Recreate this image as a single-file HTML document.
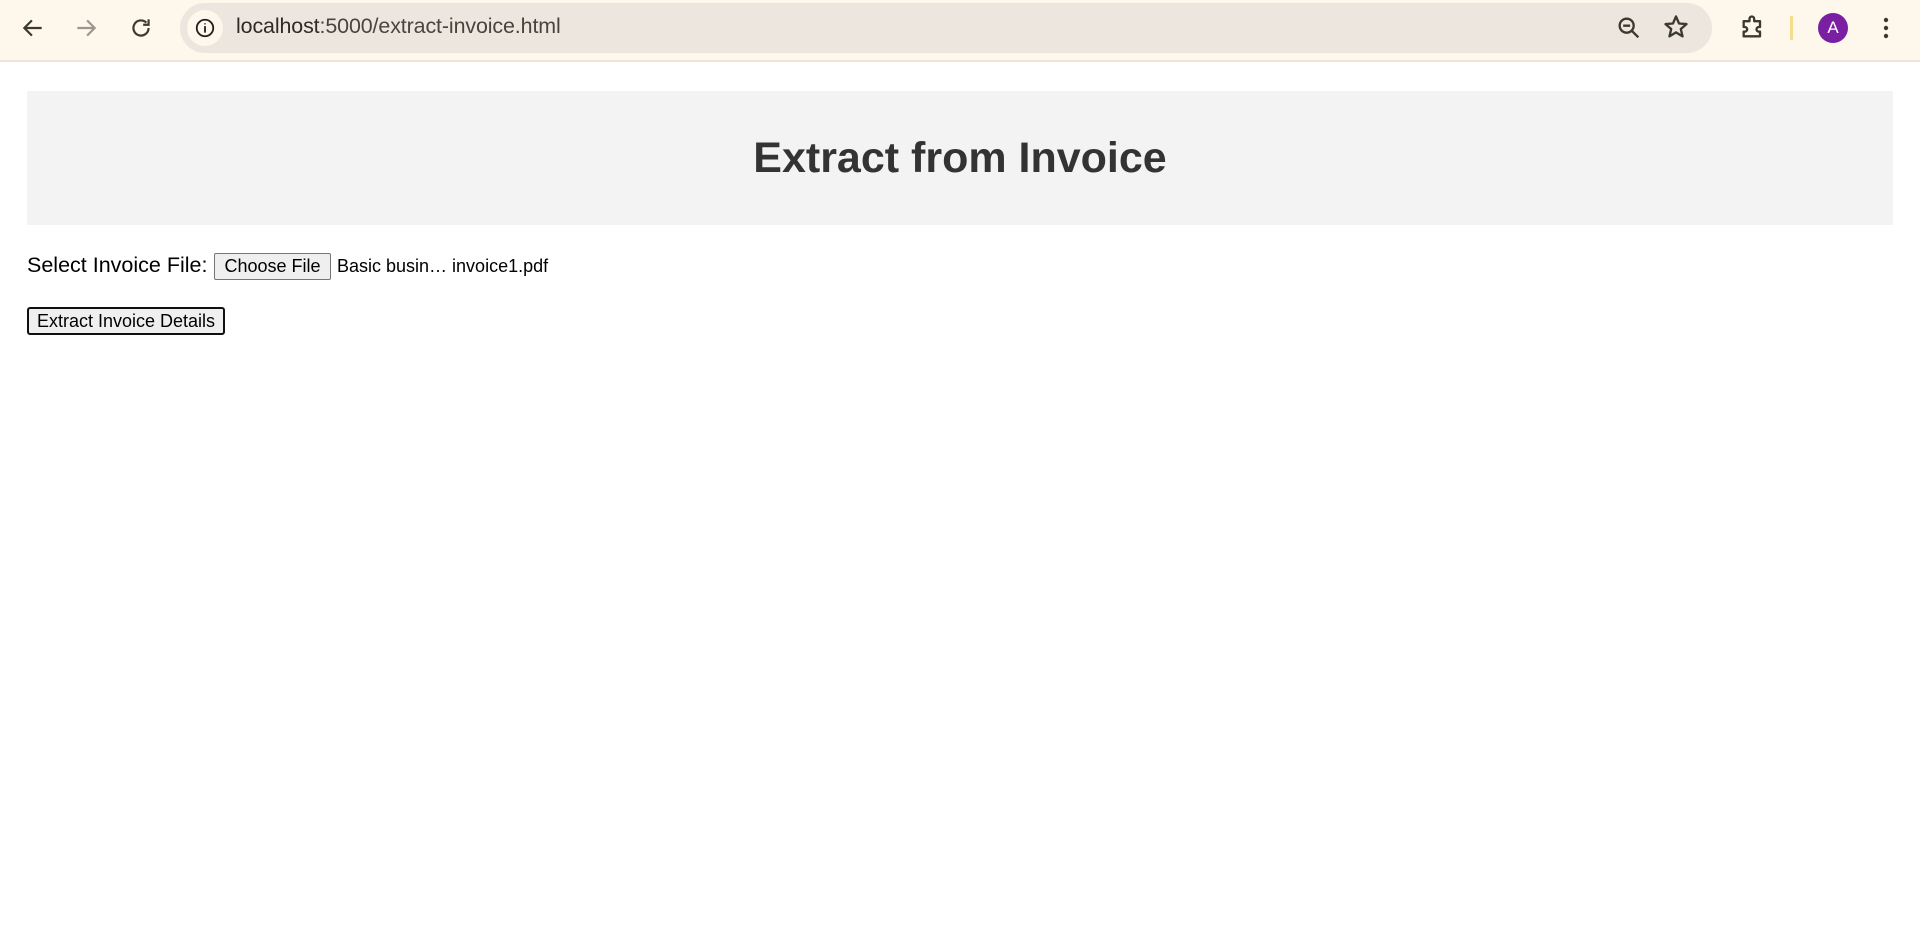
<!DOCTYPE html>
<html><head><meta charset="utf-8"><style>
*{box-sizing:border-box}
body{margin:0;width:1920px;height:935px;overflow:hidden;background:#fff;font-family:"Liberation Sans",Arial,sans-serif;position:relative}
.bar{position:absolute;left:0;top:0;width:1920px;height:62px;background:#fdf7ec;border-bottom:2px solid #eee5d6}
.omni{position:absolute;left:180px;top:3px;width:1532px;height:50px;border-radius:25px;background:#ede6df}
.info{position:absolute;left:187px;top:10px;width:36px;height:36px;border-radius:50%;background:#fdf7ec}
.url{position:absolute;left:236px;top:14px;font-size:21.4px;color:#2e2a26;letter-spacing:-0.1px}
.url span{color:#4a433d}
svg{position:absolute}
.avatar{position:absolute;left:1818px;top:13px;width:30px;height:30px;border-radius:50%;background:#7b1fa2;color:#fff;font-size:17px;text-align:center;line-height:30px}
.div{position:absolute;left:1790px;top:16px;width:3px;height:24px;background:#f6dc8a}
.hdr{position:absolute;left:27px;top:91px;width:1866px;height:134px;background:#f3f3f3}
.hdr h1{margin:0;text-align:center;line-height:134px;font-size:43px;font-weight:bold;color:#333}
.lbl{position:absolute;left:27px;top:253px;font-size:21.5px;color:#000}
.btn{position:absolute;background:#efefef;border:1px solid #767676;border-radius:2px;font-size:18px;color:#000;text-align:center}
.fname{position:absolute;left:337px;top:256px;font-size:18px;color:#000}
</style></head><body>
<div class="bar">
<svg style="left:20px;top:15px" width="26" height="26" viewBox="0 0 24 24"><path d="M20 12H5M11 5l-7 7 7 7" fill="none" stroke="#3b3a2e" stroke-width="2"/></svg>
<svg style="left:73px;top:15px" width="26" height="26" viewBox="0 0 24 24"><path d="M4 12h15M13 5l7 7-7 7" fill="none" stroke="#9a978e" stroke-width="2"/></svg>
<svg style="left:128px;top:15px" width="26" height="26" viewBox="0 0 24 24"><path d="M19 12a7 7 0 1 1-2.1-5" fill="none" stroke="#3b3a2e" stroke-width="2"/><path d="M19 4v5h-5" fill="none" stroke="#3b3a2e" stroke-width="2"/></svg>
<div class="omni"></div>
<div class="info"></div>
<svg style="left:194px;top:17px" width="22" height="22" viewBox="0 0 24 24"><circle cx="12" cy="12" r="9" fill="none" stroke="#222" stroke-width="2"/><path d="M12 10v7M12 7v1" stroke="#222" stroke-width="2"/></svg>
<div class="url">localhost<span>:5000/extract-invoice.html</span></div>
<svg style="left:1615px;top:14px" width="28" height="28" viewBox="0 0 24 24"><circle cx="10" cy="10" r="6" fill="none" stroke="#3b3a2e" stroke-width="2"/><path d="M14.5 14.5L20 20M7 10h6" stroke="#3b3a2e" stroke-width="2"/></svg>
<svg style="left:1662px;top:13px" width="28" height="28" viewBox="0 0 24 24"><path d="M12 3l2.6 6 6.4.5-4.9 4.2 1.5 6.3L12 16.6 6.4 20l1.5-6.3L3 9.5 9.4 9z" fill="none" stroke="#3b3a2e" stroke-width="2" stroke-linejoin="round"/></svg>
<svg style="left:1739px;top:13px" width="28" height="28" viewBox="0 0 24 24"><path d="M4 7h5V5a2 2 0 0 1 4 0v2h5v5h-1a2 2 0 0 0 0 4h1v4H4v-4h1a2 2 0 0 0 0-4H4z" fill="none" stroke="#3b3a2e" stroke-width="2" stroke-linejoin="round"/></svg>
<div class="div"></div>
<div class="avatar">A</div>
<svg style="left:1876px;top:14px" width="20" height="28" viewBox="0 0 20 28"><circle cx="10" cy="6" r="2.2" fill="#3b3a2e"/><circle cx="10" cy="14" r="2.2" fill="#3b3a2e"/><circle cx="10" cy="22" r="2.2" fill="#3b3a2e"/></svg>
</div>
<div class="hdr"><h1>Extract from Invoice</h1></div>
<div class="lbl">Select Invoice File:</div>
<div class="btn" style="left:214px;top:253px;width:117px;height:27px;line-height:25px">Choose File</div>
<div class="fname">Basic busin… invoice1.pdf</div>
<div class="btn" style="left:27px;top:307px;width:198px;height:28px;line-height:24px;border:2px solid #101010;border-radius:3px">Extract Invoice Details</div>
</body></html>
